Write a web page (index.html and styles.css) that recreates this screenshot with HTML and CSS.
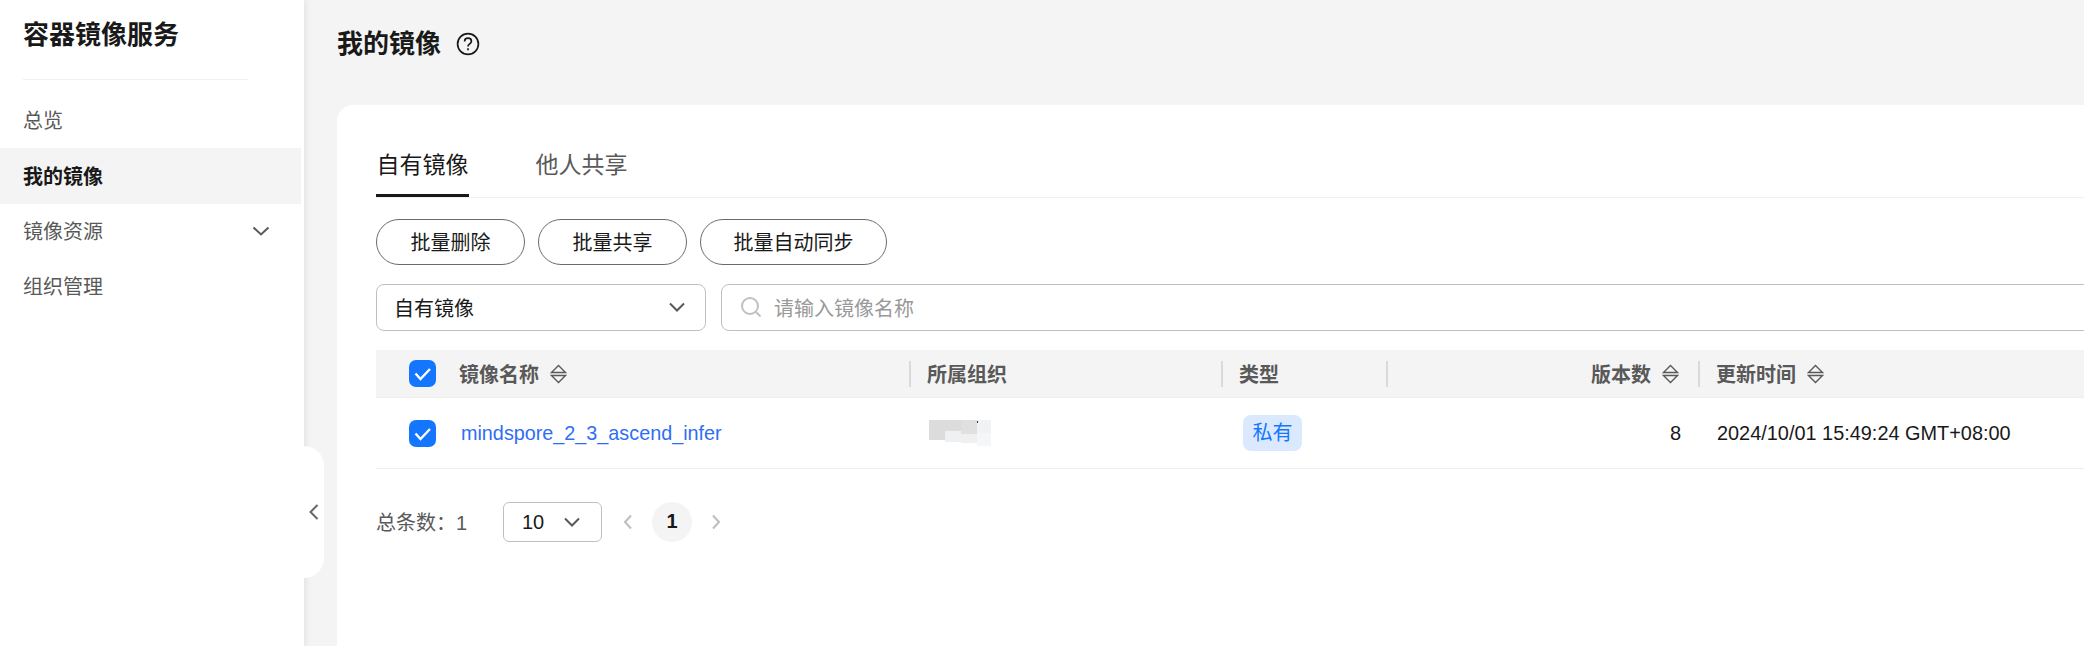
FILE: index.html
```html
<!DOCTYPE html>
<html lang="zh-CN">
<head>
<meta charset="utf-8">
<title>我的镜像</title>
<link rel="stylesheet" href="styles.css">
</head>
<body>
<div class="app">
  <aside class="sidebar">
    <div class="brand">容器镜像服务</div>
    <nav class="nav">
      <a class="nav-item">总览</a>
      <a class="nav-item active">我的镜像</a>
      <a class="nav-item">镜像资源
        <svg class="nav-chev" width="20" height="12" viewBox="0 0 20 12"><path d="M2.5 2.5 10 9.5l7.5-7" /></svg>
      </a>
      <a class="nav-item">组织管理</a>
    </nav>
    <div class="collapse">
      <svg width="12" height="18" viewBox="0 0 12 18"><path d="M9.5 2 2.5 9l7 7" /></svg>
    </div>
  </aside>
  <main class="main">
    <header class="page-head">
      <h1 class="page-title">我的镜像</h1>
      <svg class="help" width="24" height="24" viewBox="0 0 24 24"><circle cx="12" cy="12" r="10.4"/><path d="M8.6 9.4c0-1.9 1.5-3.2 3.4-3.2s3.4 1.2 3.4 3c0 2.7-3.4 2.6-3.4 5.3"/><path d="M12 16.2v2"/></svg>
    </header>
    <section class="card">
      <div class="tabs">
        <div class="tab current">自有镜像</div>
        <div class="tab">他人共享</div>
      </div>
      <div class="actions">
        <button class="pill pill-a">批量删除</button>
        <button class="pill pill-a">批量共享</button>
        <button class="pill pill-b">批量自动同步</button>
      </div>
      <div class="filters">
        <div class="select">自有镜像
          <svg class="chev" width="18" height="12" viewBox="0 0 18 12"><path d="M2 2.5 9 9.5l7-7"/></svg>
        </div>
        <div class="search">
          <svg class="search-icon" width="24" height="24" viewBox="0 0 24 24"><circle cx="11" cy="11" r="8"/><path d="m17 17 4.5 4.5"/></svg>
          <span class="placeholder">请输入镜像名称</span>
        </div>
      </div>
      <div class="grid head">
        <div class="cell check-cell">
          <span class="check"><svg width="27" height="27" viewBox="0 0 27 27"><path d="M6.5 13.5l5 5.5 9.5-10"/></svg></span>
        </div>
        <div class="cell th">镜像名称
          <svg class="sort" width="17" height="20" viewBox="0 0 17 20"><path d="M8.5 1.5 15.5 8.5h-14z"/><path d="M1.5 11.5h14L8.5 18.5z"/></svg>
        </div>
        <div class="cell th sep">所属组织</div>
        <div class="cell th sep">类型</div>
        <div class="cell th sep right">版本数
          <svg class="sort" width="17" height="20" viewBox="0 0 17 20"><path d="M8.5 1.5 15.5 8.5h-14z"/><path d="M1.5 11.5h14L8.5 18.5z"/></svg>
        </div>
        <div class="cell th sep">更新时间
          <svg class="sort" width="17" height="20" viewBox="0 0 17 20"><path d="M8.5 1.5 15.5 8.5h-14z"/><path d="M1.5 11.5h14L8.5 18.5z"/></svg>
        </div>
      </div>
      <div class="grid row">
        <div class="cell check-cell">
          <span class="check"><svg width="27" height="27" viewBox="0 0 27 27"><path d="M6.5 13.5l5 5.5 9.5-10"/></svg></span>
        </div>
        <div class="cell"><a class="link">mindspore_2_3_ascend_infer</a></div>
        <div class="cell org">
          <span class="mosaic">
            <i class="m m1"></i><i class="m m2"></i><i class="m m3"></i><i class="m m4"></i>
          </span>
        </div>
        <div class="cell type"><span class="tag">私有</span></div>
        <div class="cell num">8</div>
        <div class="cell time">2024/10/01 15:49:24 GMT+08:00</div>
      </div>
      <div class="pager">
        <span class="total">总条数：1</span>
        <div class="size">10
          <svg class="chev" width="18" height="12" viewBox="0 0 18 12"><path d="M2 2.5 9 9.5l7-7"/></svg>
        </div>
        <svg class="page-arrow prev" width="12" height="18" viewBox="0 0 12 18"><path d="M9 2.5 3 9l6 6.5"/></svg>
        <span class="page-current">1</span>
        <svg class="page-arrow" width="12" height="18" viewBox="0 0 12 18"><path d="M3 2.5 9 9l-6 6.5"/></svg>
      </div>
    </section>
  </main>
</div>
</body>
</html>
```
FILE: styles.css
```css
* { box-sizing: border-box; }
html, body { margin: 0; height: 100%; overflow: hidden; }
body {
  background: #f4f4f4;
  color: #191919;
  font-family: "Liberation Sans", "Noto Sans CJK SC", sans-serif;
  font-size: 20px;
}
svg { fill: none; stroke: currentColor; display: block; flex: none; }
.app { display: flex; height: 646px; }

.sidebar {
  position: relative;
  width: 304px;
  flex: none;
  background: #fff;
  box-shadow: 2px 0 6px rgba(0, 0, 0, .07);
  z-index: 1;
}
.brand {
  margin: 0 56px 0 23px;
  height: 80px;
  padding-top: 17px;
  line-height: 36px;
  font-size: 26px;
  font-weight: 700;
  border-bottom: 1px solid #f0f0f0;
}
.nav { display: flex; flex-direction: column; padding-top: 13px; padding-right: 3px; }
.nav-item {
  display: flex;
  align-items: center;
  justify-content: space-between;
  height: 55px;
  padding: 0 30px 2px 23px;
  color: #595959;
}
.nav-item.active { height: 56px; background: #f4f4f4; color: #191919; font-weight: 700; }
.nav-chev { stroke-width: 2; color: #595959; }
.collapse {
  position: absolute;
  left: 304px;
  top: 446px;
  width: 20px;
  height: 132px;
  background: #fff;
  border-radius: 0 20px 20px 0;
  display: flex;
  align-items: center;
  justify-content: center;
  color: #666;
  stroke-width: 2;
}

.main { flex: 1; min-width: 0; display: flex; flex-direction: column; padding-left: 33px; overflow: hidden; }
.page-head { height: 105px; flex: none; display: flex; align-items: flex-start; padding-top: 26px; gap: 15px; }
.page-title { margin: 0; font-size: 26px; line-height: 36px; font-weight: 700; }
.help { margin-top: 6px; stroke-width: 1.7; }

.card { flex: 1; background: #fff; border-radius: 16px 0 0 0; padding-left: 39px; }
.tabs { display: flex; gap: 66px; height: 93px; padding-top: 41px; border-bottom: 1px solid #f0f0f0; }
.tab { height: 51px; width: 93px; line-height: 38px; font-size: 23px; color: #595959; text-align: center; white-space: nowrap; }
.tab.current { color: #191919; border-bottom: 3px solid #191919; }

.actions { display: flex; gap: 13px; padding-top: 21px; }
.pill {
  height: 46px;
  padding: 0 0 2px;
  background: #fff;
  border: 1px solid #6b6b6b;
  border-radius: 23px;
  font: inherit;
  color: #191919;
}
.pill-a { width: 149px; }
.pill-b { width: 187px; }

.filters { display: flex; gap: 15px; padding-top: 19px; margin-right: -20px; }
.select, .search {
  height: 47px;
  background: #fff;
  border: 1px solid #c0c0c0;
  border-radius: 8px;
  display: flex;
  align-items: center;
  padding-bottom: 1px;
}
.select { width: 330px; flex: none; justify-content: space-between; padding-left: 17px; padding-right: 19px; }
.chev { stroke-width: 2; color: #595959; }
.search { flex: 1; padding-left: 17px; gap: 11px; }
.search-icon { color: #c0c0c0; stroke-width: 2; }
.placeholder { color: #999; }

.grid { display: grid; grid-template-columns: 83px 450px 312px 165px 312px 1fr; align-items: center; }
.head { margin-top: 19px; height: 48px; background: #f4f4f4; border-bottom: 1px solid #ededed; }
.row { height: 71px; border-bottom: 1px solid #ededed; }
.cell { display: flex; align-items: center; min-width: 0; }
.check-cell { padding-left: 33px; }
.check { display: block; width: 27px; height: 27px; border-radius: 7px; background: #1476ff; color: #fff; stroke-width: 2.4; }
.th { height: 26px; color: #595959; font-weight: 700; gap: 11px; }
.sep { border-left: 2px solid #d9d9d9; padding-left: 16px; }
.right { justify-content: flex-end; padding-right: 19px; }
.sort { stroke-width: 1.4; }

.link { padding-left: 2px; color: #2f6df6; font-size: 19.8px; }
.org { padding-left: 20px; }
.mosaic { position: relative; display: flex; align-items: flex-start; height: 26px; }
.mosaic::after {
  content: "";
  position: absolute;
  left: 48px;
  top: 1px;
  width: 1px;
  height: 2px;
  background: #333;
}
.m { display: block; width: 16px; }
.m1 { height: 20px; background: #dcdcdc; }
.m2 { height: 22px; background: linear-gradient(#dcdcdc 50%, #eef0f1 50%); }
.m3 { height: 23px; background: linear-gradient(#e0e0e0 60%, #f0f0f0 60%); }
.m4 { height: 26px; width: 14px; background: linear-gradient(#f0f2f3 50%, #f5f6f7 50%); }
.type { padding-left: 22px; }
.tag {
  width: 59px;
  height: 36px;
  line-height: 36px;
  text-align: center;
  border-radius: 8px;
  background: #dbe9ff;
  color: #1476ff;
}
.num { justify-content: flex-end; padding-right: 17px; }
.time { padding-left: 19px; font-size: 19.9px; }

.pager { display: flex; align-items: center; height: 40px; margin-top: 33px; }
.total { width: 127px; padding-bottom: 2px; color: #595959; }
.size {
  width: 99px;
  height: 40px;
  border: 1px solid #c0c0c0;
  border-radius: 6px;
  display: flex;
  align-items: center;
  justify-content: space-between;
  padding: 0 20px 0 18px;
  font-size: 20px;
}
.page-arrow { margin: 0 19px; color: #bdbdbd; stroke-width: 2; }
.page-arrow.prev { margin-left: 20px; }
.page-current {
  width: 40px;
  height: 40px;
  line-height: 38px;
  border-radius: 50%;
  background: #f4f4f4;
  text-align: center;
  font-weight: 700;
  margin-left: -1px;
  margin-right: -1px;
}
```
